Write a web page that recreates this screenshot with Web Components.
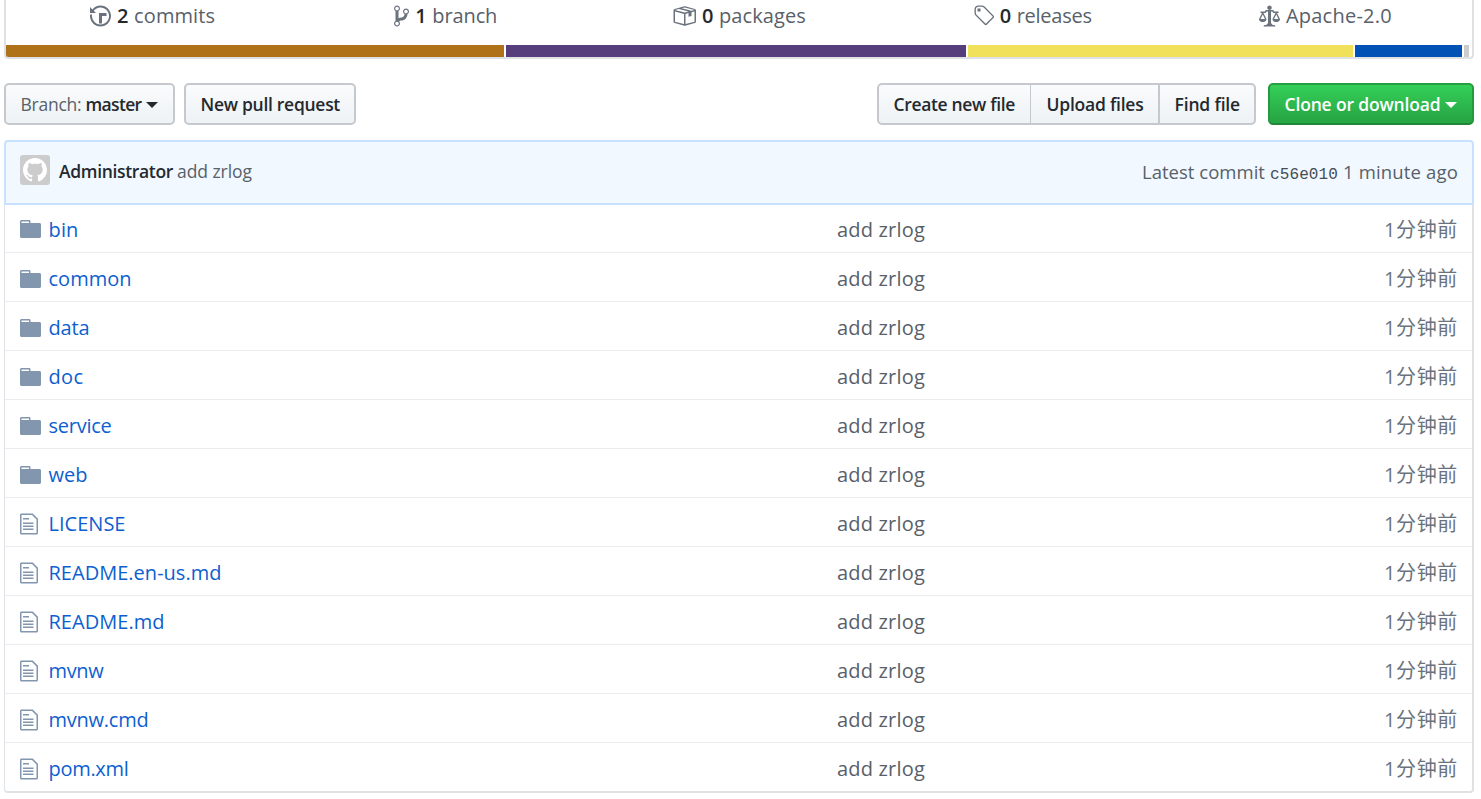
<!DOCTYPE html>
<html lang="en">
<head>
<meta charset="utf-8">
<title>Repository files</title>
<style>
    body {
        margin: 0;
        height: 799px;
        overflow: hidden;
        background: #fff;
        color: #24292e;
        font-family: "Open Sans", "Noto Sans CJK SC", sans-serif;
    }
</style>
</head>
<body>
<repo-page></repo-page>

<script>
const ICONS = {
    history: [14, 'M8 13H6V6h5v2H8v5zM7 1C4.81 1 2.87 2.02 1.59 3.59L0 2v4h4L2.5 4.5C3.55 3.17 5.17 2.3 7 2.3c3.14 0 5.7 2.56 5.7 5.7s-2.56 5.7-5.7 5.7A5.71 5.71 0 011.3 8c0-.34.03-.67.09-1H.08C.03 7.33 0 7.66 0 8c0 3.86 3.14 7 7 7s7-3.14 7-7-3.14-7-7-7z'],
    branch: [10, 'M10 5c0-1.11-.89-2-2-2a1.993 1.993 0 00-1 3.72v.3c-.02.52-.23.98-.63 1.38-.4.4-.86.61-1.38.63-.83.02-1.48.16-2 .45V4.72a1.993 1.993 0 00-1-3.72C.88 1 0 1.89 0 3a2 2 0 001 1.72v6.56c-.59.35-1 .99-1 1.72 0 1.11.89 2 2 2 1.11 0 2-.89 2-2 0-.53-.2-1-.53-1.36.09-.06.48-.41.59-.47.25-.11.56-.17.94-.17 1.05-.05 1.95-.45 2.75-1.25S8.95 7.77 9 6.73h-.02C9.59 6.37 10 5.73 10 5zM2 1.8c.66 0 1.2.55 1.2 1.2 0 .65-.55 1.2-1.2 1.2C1.35 4.2.8 3.65.8 3c0-.65.55-1.2 1.2-1.2zm0 12.41c-.66 0-1.2-.55-1.2-1.2 0-.65.55-1.2 1.2-1.2.65 0 1.2.55 1.2 1.2 0 .65-.55 1.2-1.2 1.2zm6-8c-.66 0-1.2-.55-1.2-1.2 0-.65.55-1.2 1.2-1.2.65 0 1.2.55 1.2 1.2 0 .65-.55 1.2-1.2 1.2z'],
    package: [16, 'M1 4.27v7.47c0 .45.3.84.75.97l6.5 1.73c.16.05.34.05.5 0l6.5-1.73c.45-.13.75-.52.75-.97V4.27c0-.45-.3-.84-.75-.97l-6.5-1.74a1.4 1.4 0 00-.5 0L1.75 3.3c-.45.13-.75.52-.75.97zm7 9.09l-6-1.59V5l6 1.61v6.75zM2 4l2.5-.67L11 5.06l-2.5.67L2 4zm13 7.77l-6 1.59V6.61l2-.55V8.5l2-.53V5.53L15 5v6.77zm-2-7.24L6.5 2.8l2-.53L15 4l-2 .53z'],
    tag: [14, 'M7.73 1.73C7.26 1.26 6.62 1 5.96 1H3.5C2.13 1 1 2.13 1 3.5v2.47c0 .66.27 1.3.73 1.77l6.06 6.06c.39.39 1.02.39 1.41 0l4.59-4.59a.996.996 0 000-1.41L7.73 1.73zM2.38 7.09c-.31-.3-.47-.7-.47-1.13V3.5c0-.88.72-1.59 1.59-1.59h2.47c.42 0 .83.16 1.13.47l6.14 6.13-4.73 4.73-6.13-6.15zM3.01 3h2v2H3V3h.01z'],
    law: [14, 'M7 4c-.83 0-1.5-.67-1.5-1.5S6.17 1 7 1s1.5.67 1.5 1.5S7.83 4 7 4zm7 6c0 1.11-.89 2-2 2h-1c-1.11 0-2-.89-2-2l2-4h-1c-.55 0-1-.45-1-1H8v8c.42 0 1 .45 1 1h1c.42 0 1 .45 1 1H3c0-.55.58-1 1-1h1c0-.55.58-1 1-1h.03L6 5H5c0 .55-.45 1-1 1H3l2 4c0 1.11-.89 2-2 2H2c-1.11 0-2-.89-2-2l2-4H1V5h3c0-.55.45-1 1-1h4c.55 0 1 .45 1 1h3v1h-1l2 4zM2.5 7L1 10h3L2.5 7zM13 10l-1.5-3-1.5 3h3z'],
    file: [12, 'M6 5H2V4h4v1zM2 8h7V7H2v1zm0 2h7V9H2v1zm0 2h7v-1H2v1zm10-7.5V14c0 .55-.45 1-1 1H1c-.55 0-1-.45-1-1V2c0-.55.45-1 1-1h7.5L12 4.5zM11 5L8 2H1v12h10V5z'],
    folder: [14, 'M13 4H7V3c0-.66-.31-1-1-1H1c-.55 0-1 .45-1 1v10c0 .55.45 1 1 1h12c.55 0 1-.45 1-1V5c0-.55-.45-1-1-1zM6 4H1V3h5v1z'],
    github: [16, 'M8 0C3.58 0 0 3.58 0 8c0 3.54 2.29 6.53 5.47 7.59.4.07.55-.17.55-.38 0-.19-.01-.82-.01-1.49-2.01.37-2.53-.49-2.69-.94-.09-.23-.48-.94-.82-1.13-.28-.15-.68-.52-.01-.53.63-.01 1.08.58 1.23.82.72 1.21 1.87.87 2.33.66.07-.52.28-.87.51-1.07-1.78-.2-3.64-.89-3.64-3.95 0-.87.31-1.59.82-2.15-.08-.2-.36-1.02.08-2.12 0 0 .67-.21 2.2.82.64-.18 1.32-.27 2-.27.68 0 1.36.09 2 .27 1.53-1.04 2.2-.82 2.2-.82.44 1.1.16 1.92.08 2.12.51.56.82 1.27.82 2.15 0 3.07-1.87 3.75-3.65 3.95.29.25.54.73.54 1.48 0 1.07-.01 1.93-.01 2.2 0 .21.15.46.55.38A8.013 8.013 0 0016 8c0-4.42-3.58-8-8-8z']
};

function attach(element, html) {
    const tmpl = document.createElement('template');
    tmpl.innerHTML = html;
    const root = element.attachShadow({mode: 'open'});
    root.appendChild(tmpl.content.cloneNode(true));
    return root;
}

class Icon extends HTMLElement {
    connectedCallback() {
        if (this.shadowRoot) {
            return;
        }
        const [width, path] = ICONS[this.getAttribute('name')];
        const scale = Number(this.getAttribute('scale') || 1.5);
        attach(this, `
            <style>
                :host { display: block; flex: none; }
                svg { display: block; fill: currentColor; }
            </style>
            <svg width="${width * scale}" height="${16 * scale}" viewBox="0 0 ${width} 16"><path fill-rule="evenodd" d="${path}"/></svg>
        `);
    }
}

// Tracks its text in or out until the line is as wide as the width attribute.
class FitText extends HTMLElement {
    connectedCallback() {
        if (this.shadowRoot) {
            return;
        }
        attach(this, `
            <style>
                :host { display: inline-block; flex: none; white-space: nowrap; }
            </style>
            <slot></slot>
        `);
        const target = Number(this.getAttribute('width'));
        const natural = this.getBoundingClientRect().width;
        this.style.letterSpacing = (target - natural) / this.textContent.length + 'px';
    }
}

class RepoStat extends HTMLElement {
    connectedCallback() {
        if (this.shadowRoot) {
            return;
        }
        const count = this.getAttribute('count');
        attach(this, `
            <style>
                :host {
                    display: flex;
                    justify-content: center;
                    align-items: center;
                    height: 32px;
                    color: #586069;
                    font-size: 20px;
                    line-height: 32px;
                }
                repo-icon { color: #6a737d; margin-right: 6px; }
                .count { color: #24292e; font-weight: 600; margin-right: 5px; }
            </style>
            <repo-icon name="${this.getAttribute('icon')}"></repo-icon>
            ${count ? `<fit-text class="count" width="12">${count}</fit-text>` : ''}
            <fit-text width="${this.getAttribute('width')}">${this.getAttribute('label')}</fit-text>
        `);
    }
}

class RepoSummary extends HTMLElement {
    constructor() {
        super();
        attach(this, `
            <style>
                :host {
                    display: block;
                    box-sizing: border-box;
                    height: 59px;
                    border: 2px solid #dfe2e5;
                    border-top: 0;
                    border-radius: 0 0 4px 4px;
                    overflow: hidden;
                }
                .stats {
                    display: grid;
                    grid-template-columns: repeat(5, 1fr);
                    height: 45px;
                }
                .languages { display: flex; gap: 2px; height: 12px; }
            </style>
            <div class="stats">
                <repo-stat icon="history" count="2" label="commits" width="81"></repo-stat>
                <repo-stat icon="branch" count="1" label="branch" width="65"></repo-stat>
                <repo-stat icon="package" count="0" label="packages" width="87"></repo-stat>
                <repo-stat icon="tag" count="0" label="releases" width="75"></repo-stat>
                <repo-stat icon="law" label="Apache-2.0" width="106"></repo-stat>
            </div>
            <div class="languages">
                <span style="width: 498px; background: #b07219"></span>
                <span style="width: 460px; background: #563d7c"></span>
                <span style="width: 385px; background: #f1e05a"></span>
                <span style="width: 107px; background: #0052b4"></span>
                <span style="width: 5px; background: #ccc"></span>
            </div>
        `);
    }
}

class RepoButton extends HTMLElement {
    constructor() {
        super();
        attach(this, `
            <style>
                :host {
                    display: flex;
                    align-items: center;
                    box-sizing: border-box;
                    height: 42px;
                    padding: 0 0 0 14.5px;
                    border: 2px solid #c5c9cd;
                    border-radius: 5px;
                    background: linear-gradient(180deg, #fafbfc, #eff3f6 90%);
                    font-size: 17.5px;
                    font-weight: 600;
                    line-height: 38px;
                    white-space: nowrap;
                }
                :host([primary]) {
                    color: #fff;
                    border-color: #269f42 #249a40 #22863a;
                    background: linear-gradient(180deg, #34d058, #28a745 90%);
                }
                :host([caret])::after {
                    content: "";
                    margin: 2px 0 0 4px;
                    border: 6px solid transparent;
                    border-top-color: currentColor;
                    border-bottom: 0;
                }
            </style>
            <slot></slot>
        `);
    }
}

class RepoToolbar extends HTMLElement {
    constructor() {
        super();
        attach(this, `
            <style>
                :host { display: flex; margin-top: 24px; }
                .light { color: #586069; font-weight: 400; margin-right: 4px; }
                .group { display: flex; margin: 0 12px 0 auto; }
                .group repo-button { border-radius: 0; }
                .group repo-button:first-child { border-radius: 5px 0 0 5px; border-right-width: 1px; }
                .group repo-button:nth-child(2) { border-left-width: 0; border-right-width: 0; padding-left: 15.5px; }
                .group repo-button:last-child { border-radius: 0 5px 5px 0; }
            </style>
            <repo-button caret style="width: 171px; margin-right: 9px"><fit-text class="light" width="61">Branch:</fit-text><fit-text width="56">master</fit-text></repo-button>
            <repo-button style="width: 172px"><fit-text width="139.5">New pull request</fit-text></repo-button>
            <div class="group">
                <repo-button style="width: 154px"><fit-text width="121.5">Create new file</fit-text></repo-button>
                <repo-button style="width: 127px"><fit-text width="97">Upload files</fit-text></repo-button>
                <repo-button style="width: 98px"><fit-text width="65.5">Find file</fit-text></repo-button>
            </div>
            <repo-button primary caret style="width: 206px"><fit-text width="156">Clone or download</fit-text></repo-button>
        `);
    }
}

class CommitBar extends HTMLElement {
    constructor() {
        super();
        attach(this, `
            <style>
                :host {
                    display: flex;
                    align-items: center;
                    box-sizing: border-box;
                    height: 65px;
                    margin-top: 15px;
                    padding: 0 14px;
                    border: 2px solid #c8e1ff;
                    border-radius: 4px 4px 0 0;
                    background: #f1f8ff;
                    color: #586069;
                    font-size: 17.5px;
                    line-height: 30px;
                }
                :host > * { margin-bottom: 2px; }
                fit-text { padding-bottom: 2px; }
                .avatar {
                    display: flex;
                    justify-content: center;
                    align-items: center;
                    width: 30px;
                    height: 30px;
                    margin: 0 9px 5px 0;
                    border-radius: 3px;
                    background: #ccc;
                    color: #fff;
                }
                .author { color: #24292e; font-weight: 600; margin-right: 4px; }
                .latest { display: flex; align-items: baseline; margin: 3px 0 0 auto; font-size: 18.5px; }
                .sha { color: #444d56; font-family: "Liberation Mono", monospace; font-size: 16px; margin: 0 5px; }
            </style>
            <div class="avatar"><repo-icon name="github" scale="1.5"></repo-icon></div>
            <fit-text class="author" width="114">Administrator</fit-text>
            <fit-text width="75">add zrlog</fit-text>
            <div class="latest">
                <fit-text width="123">Latest commit</fit-text>
                <fit-text class="sha" width="68">c56e010</fit-text>
                <fit-text width="115">1 minute ago</fit-text>
            </div>
        `);
    }
}

class FileRow extends HTMLElement {
    connectedCallback() {
        if (this.shadowRoot) {
            return;
        }
        attach(this, `
            <style>
                :host {
                    display: grid;
                    grid-template-columns: 28.5px 788.5px 1fr auto;
                    align-items: center;
                    box-sizing: border-box;
                    height: 49px;
                    padding: 2px 14px 0 15px;
                    border-top: 1px solid #eaecef;
                    color: #586069;
                    font-size: 20px;
                    line-height: 44px;
                }
                :host(:first-child) { height: 47px; padding-top: 0; border-top: 0; }
                repo-icon { color: #8296ae; margin-top: 1px; }
                a { color: #0d5fd0; }
                fit-text { padding-top: 2px; }
                .age { color: #6a737d; }
            </style>
            <repo-icon name="${this.getAttribute('icon')}"></repo-icon>
            <a><fit-text width="${this.getAttribute('width')}">${this.getAttribute('name')}</fit-text></a>
            <fit-text style="justify-self: start" width="88">add zrlog</fit-text>
            <fit-text class="age" width="74">1分钟前</fit-text>
        `);
    }
}

// [icon, name, width of the name]
const FILES = [
    ['folder', 'bin', 30],
    ['folder', 'common', 83],
    ['folder', 'data', 41],
    ['folder', 'doc', 35],
    ['folder', 'service', 63],
    ['folder', 'web', 39],
    ['file', 'LICENSE', 77],
    ['file', 'README.en-us.md', 173],
    ['file', 'README.md', 116],
    ['file', 'mvnw', 55],
    ['file', 'mvnw.cmd', 100],
    ['file', 'pom.xml', 80]
];

class FileList extends HTMLElement {
    constructor() {
        super();
        attach(this, `
            <style>
                :host {
                    display: block;
                    border: 2px solid #dfe2e5;
                    border-top: 0;
                    border-left-width: 1px;
                    border-radius: 0 0 4px 4px;
                }
            </style>
            <div>${FILES.map(([icon, name, width]) =>
                `<file-row icon="${icon}" name="${name}" width="${width}"></file-row>`).join('')}</div>
        `);
    }
}

class RepoPage extends HTMLElement {
    constructor() {
        super();
        attach(this, `
            <style>
                :host { display: block; width: 1470px; margin-left: 4px; }
            </style>
            <repo-summary></repo-summary>
            <repo-toolbar></repo-toolbar>
            <commit-bar></commit-bar>
            <file-list></file-list>
        `);
    }
}

window.customElements.define('repo-icon', Icon);
window.customElements.define('fit-text', FitText);
window.customElements.define('repo-stat', RepoStat);
window.customElements.define('repo-summary', RepoSummary);
window.customElements.define('repo-button', RepoButton);
window.customElements.define('repo-toolbar', RepoToolbar);
window.customElements.define('commit-bar', CommitBar);
window.customElements.define('file-row', FileRow);
window.customElements.define('file-list', FileList);
window.customElements.define('repo-page', RepoPage);
</script>
</body>
</html>
